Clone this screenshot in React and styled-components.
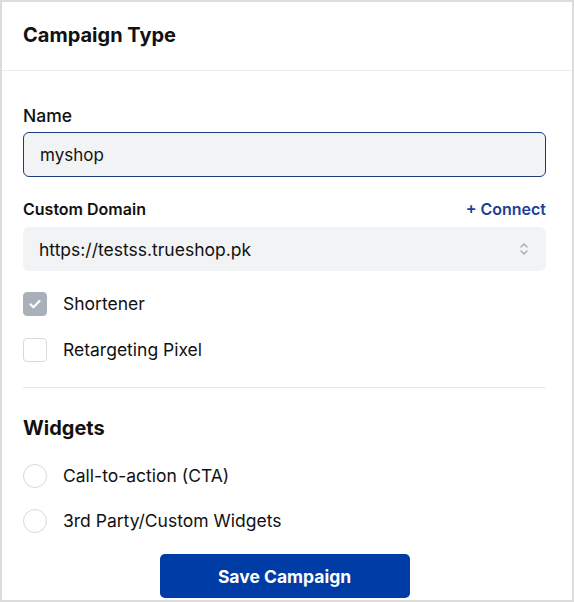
import React from 'react'
import styled, { createGlobalStyle } from 'styled-components'

const GlobalStyle = createGlobalStyle`
    * { box-sizing: border-box; }
    body {
        margin: 0;
        font-family: Inter, "Noto Sans", sans-serif;
        color: #111;
        background: #fff;
    }
`

const Card = styled.div`
    height: 602px;
    border: 2px solid #dcdcdc;
    background: #fff;
    overflow: hidden;
    display: flex;
    flex-direction: column;
`

const Header = styled.div`
    height: 69px;
    padding: 0 21px 2px;
    display: flex;
    align-items: center;
    border-bottom: 1px solid #ececec;
`

const Title = styled.h2`
    margin: 0;
    font-size: 20px;
    font-weight: 700;
    line-height: 24px;
`

const Body = styled.div`
    padding: 33px 26px 0 21px;
    display: flex;
    flex-direction: column;
`

const Label = styled.label`
    display: block;
    font-size: ${({ $small }) => ($small ? '16px' : '17.5px')};
    font-weight: ${({ $small }) => ($small ? 600 : 500)};
    line-height: 24px;
`

const LabelRow = styled.div`
    display: flex;
    justify-content: space-between;
    align-items: center;
    margin-top: 20px;
    margin-bottom: 6px;
`

const ConnectLink = styled.a`
    color: #1e3f96;
    font-size: 16px;
    font-weight: 600;
    text-decoration: none;
    line-height: 24px;
`

const TextInput = styled.input`
    margin-top: 4px;
    width: 100%;
    height: 45px;
    padding: 0 16px;
    border: 1px solid #1e3a7b;
    border-radius: 6px;
    background: #f2f3f5;
    font-family: inherit;
    font-size: 17px;
    color: #111;
    outline: none;
`

const Select = styled.div`
    height: 44px;
    padding: 0 16px;
    border-radius: 6px;
    background: #f2f3f5;
    display: flex;
    align-items: center;
    justify-content: space-between;
    font-size: 17.5px;
`

const Option = styled.div`
    display: flex;
    align-items: center;
    gap: 16px;
    margin-top: ${({ $gap }) => $gap}px;
    font-size: 17.5px;
    line-height: 24px;
`

const Box = styled.span`
    width: 24px;
    height: 24px;
    flex-shrink: 0;
    border-radius: ${({ $round }) => ($round ? '50%' : '4px')};
    border: 1px solid ${({ $checked }) => ($checked ? '#a9b0ba' : '#d6d9de')};
    background: ${({ $checked }) => ($checked ? '#a9b0ba' : '#fff')};
    display: flex;
    align-items: center;
    justify-content: center;
`

const Divider = styled.hr`
    margin: 25px 0 0;
    border: 0;
    border-top: 1px solid #e8e8e8;
`

const SectionTitle = styled.h3`
    margin: 26px 0 0;
    font-size: 20px;
    font-weight: 700;
    line-height: 28px;
`

const SaveButton = styled.button`
    align-self: center;
    margin-top: 21px;
    width: 250px;
    height: 44px;
    border: 0;
    border-radius: 5px;
    background: #003ca6;
    color: #fff;
    font-family: inherit;
    font-size: 17.5px;
    font-weight: 700;
`

const Check = () => (
    <svg width="14" height="14" viewBox="0 0 14 14" fill="none">
        <path d="M2.5 7.3l3 3 6-6.3" stroke="#fff" strokeWidth="2.2" strokeLinecap="round" strokeLinejoin="round" />
    </svg>
)

const UpDown = () => (
    <svg width="12" height="16" viewBox="0 0 12 16" fill="none">
        <path d="M3 6l3-3 3 3M3 10l3 3 3-3" stroke="#a0a5ad" strokeWidth="1.2" strokeLinecap="round" strokeLinejoin="round" />
    </svg>
)

const App = () => {
    return (
        <>
            <GlobalStyle />
            <Card>
                <Header>
                    <Title>Campaign Type</Title>
                </Header>
                <Body>
                    <Label>Name</Label>
                    <TextInput defaultValue="myshop" />

                    <LabelRow>
                        <Label $small>Custom Domain</Label>
                        <ConnectLink href="#">+ Connect</ConnectLink>
                    </LabelRow>
                    <Select>
                        <span>https://testss.trueshop.pk</span>
                        <UpDown />
                    </Select>

                    <Option $gap={21}>
                        <Box $checked><Check /></Box>
                        Shortener
                    </Option>
                    <Option $gap={22}>
                        <Box />
                        Retargeting Pixel
                    </Option>

                    <Divider />

                    <SectionTitle>Widgets</SectionTitle>
                    <Option $gap={22}>
                        <Box $round />
                        Call-to-action (CTA)
                    </Option>
                    <Option $gap={21}>
                        <Box $round />
                        3rd Party/Custom Widgets
                    </Option>

                    <SaveButton>Save Campaign</SaveButton>
                </Body>
            </Card>
        </>
    )
}

export default App
